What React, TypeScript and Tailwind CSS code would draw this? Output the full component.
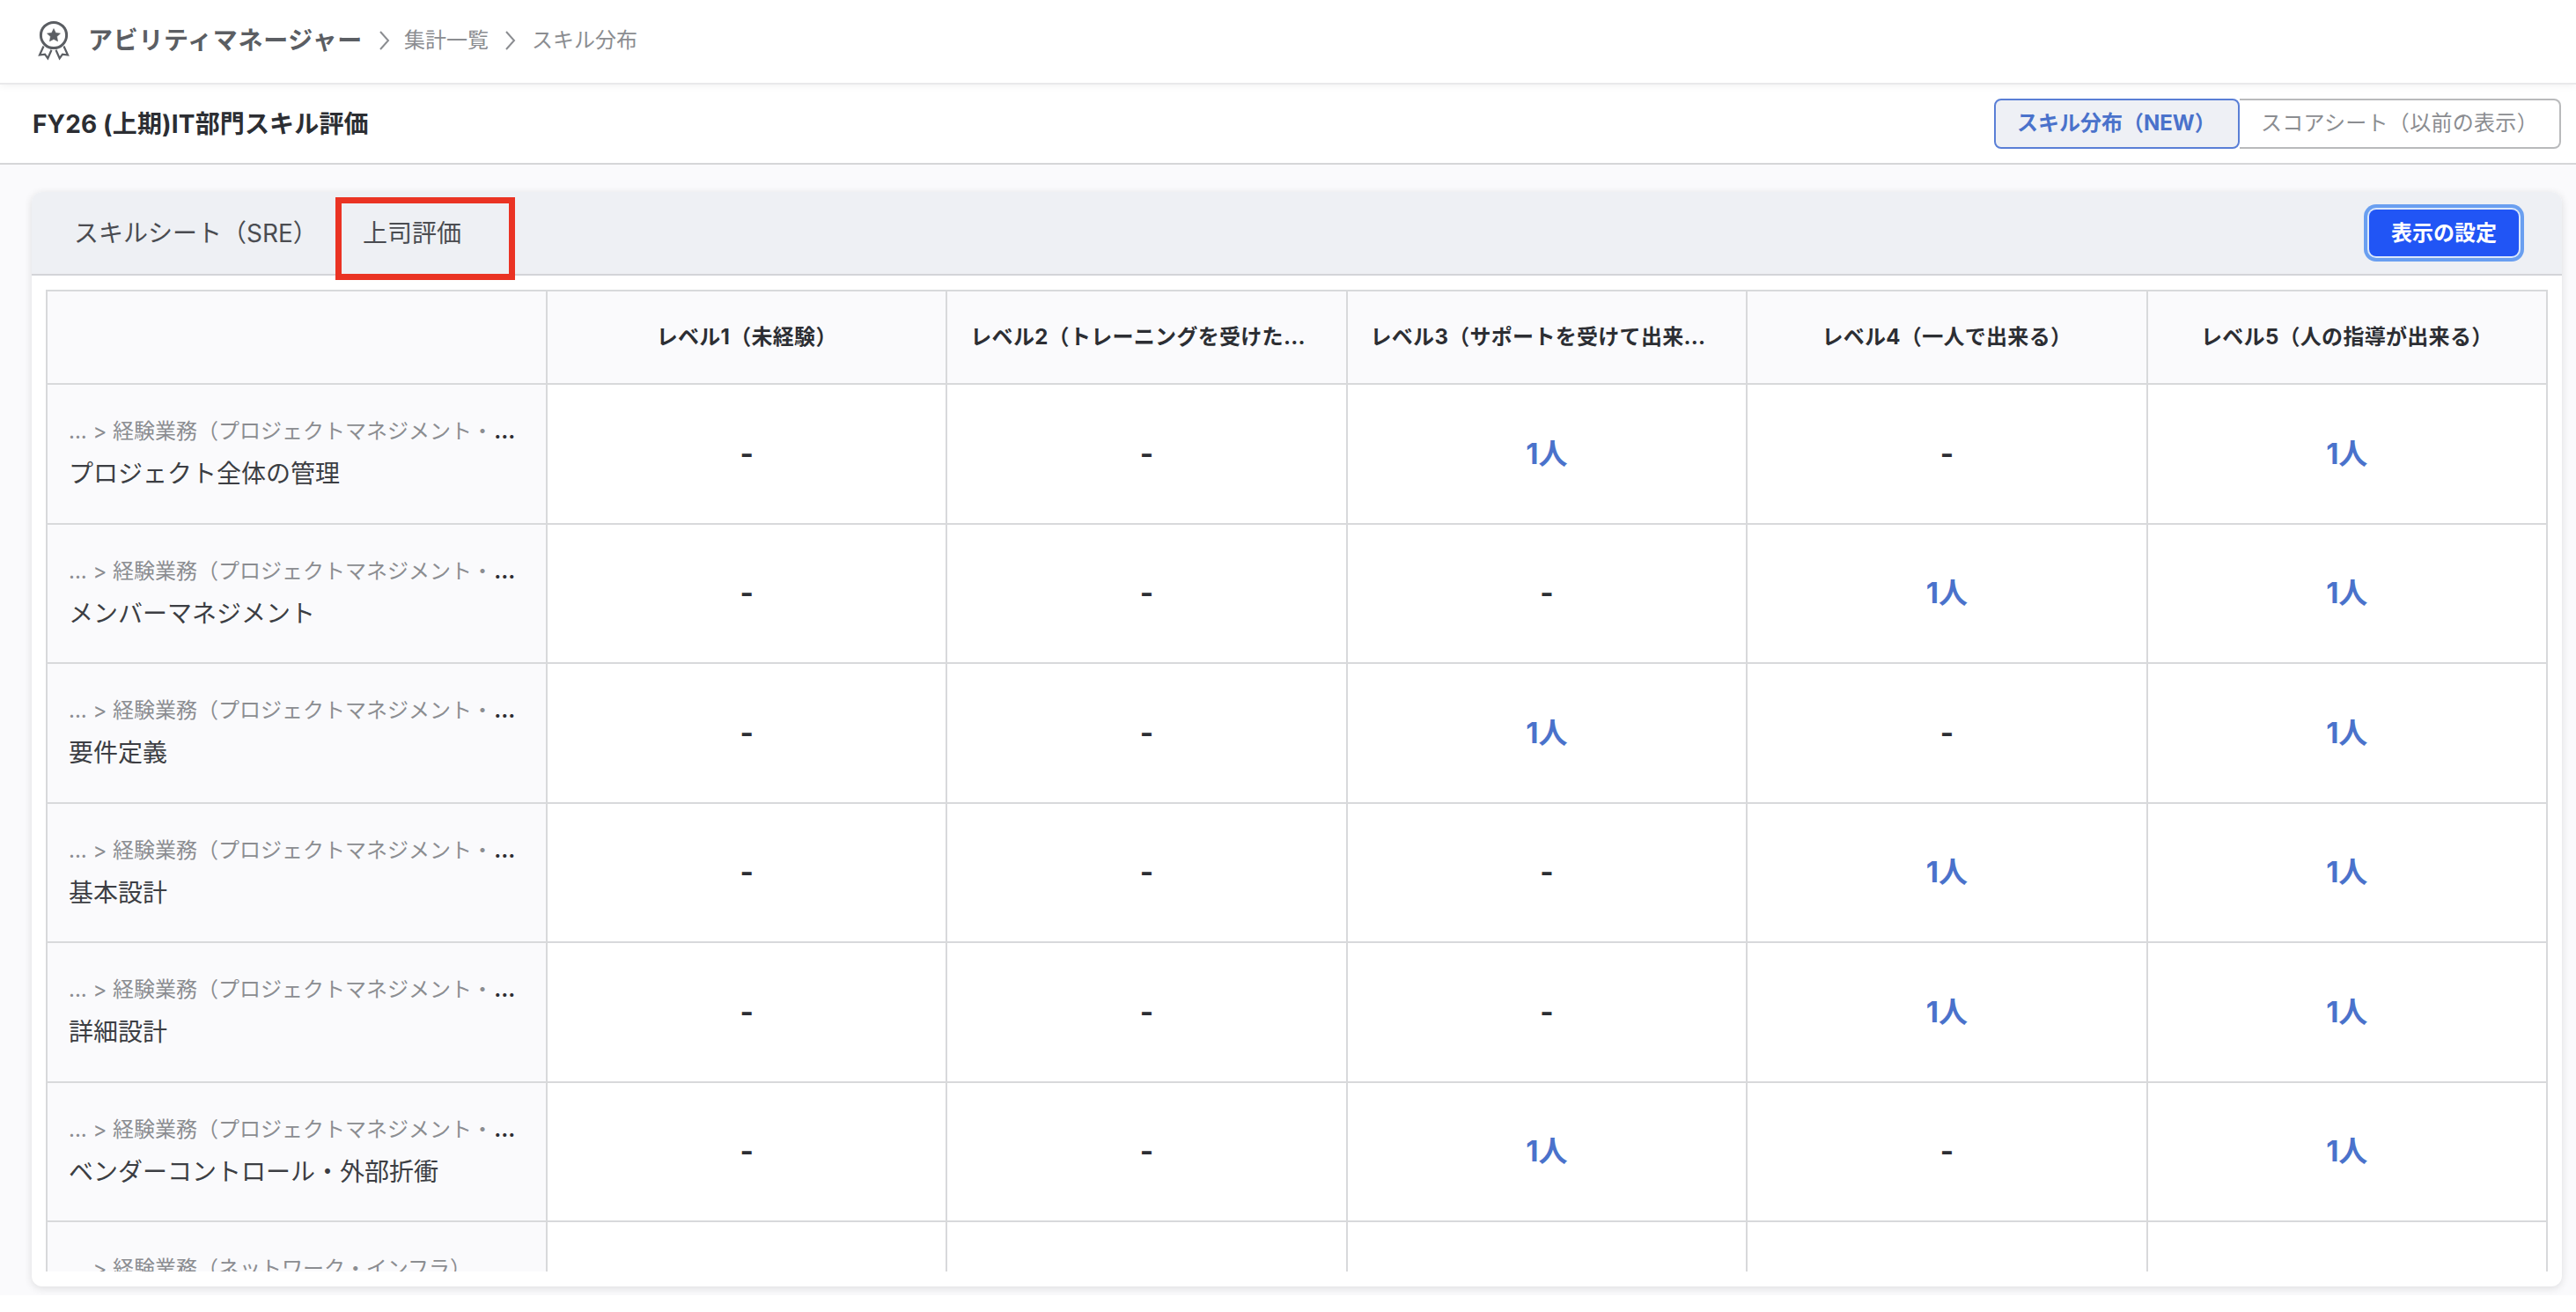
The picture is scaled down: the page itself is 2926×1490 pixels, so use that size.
import { clsx } from "clsx";

interface Skill {
  parent: string;
  truncated: boolean;
  name: string;
  counts: number[];
}

const PROJECT = "... > 経験業務（プロジェクトマネジメント・";

const levels = [
  "レベル1（未経験）",
  "レベル2（トレーニングを受けた...",
  "レベル3（サポートを受けて出来...",
  "レベル4（一人で出来る）",
  "レベル5（人の指導が出来る）",
];

const skills: Skill[] = [
  { parent: PROJECT, truncated: true, name: "プロジェクト全体の管理", counts: [0, 0, 1, 0, 1] },
  { parent: PROJECT, truncated: true, name: "メンバーマネジメント", counts: [0, 0, 0, 1, 1] },
  { parent: PROJECT, truncated: true, name: "要件定義", counts: [0, 0, 1, 0, 1] },
  { parent: PROJECT, truncated: true, name: "基本設計", counts: [0, 0, 0, 1, 1] },
  { parent: PROJECT, truncated: true, name: "詳細設計", counts: [0, 0, 0, 1, 1] },
  { parent: PROJECT, truncated: true, name: "ベンダーコントロール・外部折衝", counts: [0, 0, 1, 0, 1] },
];

const MedalIcon = () => (
  <svg className="h-[46px] w-[38px] shrink-0" viewBox="0 0 38 46" fill="none" stroke="#5b5e63" strokeWidth="2.6">
    <circle cx="19" cy="17" r="14.6" strokeWidth="3" />
    <path
      d="M19 9.5l2.3 4.8 5.2.7-3.8 3.6.9 5.3-4.6-2.5-4.6 2.5.9-5.3-3.8-3.6 5.2-.7z"
      fill="#5b5e63"
      strokeWidth="0.5"
    />
    <path d="M7.5 29.5L3 39.5l6-.8 3.3 4.5 4.2-9.5" strokeWidth="2.2" />
    <path d="M30.5 29.5L35 39.5l-6-.8-3.3 4.5-4.2-9.5" strokeWidth="2.2" />
  </svg>
);

const Chevron = () => (
  <svg className="h-[24px] w-[14px] shrink-0" viewBox="0 0 14 24" fill="none" stroke="#8b8d91" strokeWidth="2">
    <path d="M2 2l9 10-9 10" />
  </svg>
);

const Header = () => (
  <header className="relative z-10 flex h-[96px] items-center border-b-2 border-[#e9e9eb] bg-white pb-[2px] pl-[42px] shadow-[0_2px_8px_rgba(0,0,0,0.05)]">
    <MedalIcon />
    <span className="ml-[20px] text-[28px] font-bold tracking-[0.7px] text-[#5b5e63]">アビリティマネージャー</span>
    <span className="ml-[18px] flex">
      <Chevron />
    </span>
    <span className="ml-[15px] text-[24px] text-[#8b8d91]">集計一覧</span>
    <span className="ml-[18px] flex">
      <Chevron />
    </span>
    <span className="ml-[17px] text-[24px] text-[#8b8d91]">スキル分布</span>
  </header>
);

const TitleBar = () => (
  <div className="flex h-[91px] items-center justify-between border-b-2 border-[#d5d6d8] bg-white pr-[17px] pl-[37px]">
    <h1 className="text-[28px] font-bold tracking-[0.15px] text-[#2c2e33]">FY26 (上期)IT部門スキル評価</h1>
    <div className="-mt-px flex h-[57px] text-[24px]">
      <button className="w-[279px] rounded-lg border-2 border-[#5a7fd6] bg-[#eef0f5] pl-[24px] text-left font-bold whitespace-nowrap text-[#4a72cb]">
        スキル分布（NEW）
      </button>
      <button className="w-[365px] rounded-r-lg border-2 border-l-0 border-[#b9babc] bg-white pl-[24px] text-left tracking-[0.3px] whitespace-nowrap text-[#8b8d91]">
        スコアシート（以前の表示）
      </button>
    </div>
  </div>
);

const Tabs = () => (
  <div className="flex h-[95px] shrink-0 items-center rounded-t-xl border-b-2 border-[#d3d4d8] bg-[#eef0f4] pr-[49px] text-[28px] text-[#4a4c51]">
    <button className="ml-[48px] whitespace-nowrap">スキルシート（SRE）</button>
    {/* highlight frame drawn over the tab */}
    <div className="absolute top-[6px] left-[345px] h-[94px] w-[204px] border-[7px] border-[#ea3323]" />
    <button className="absolute top-[26px] left-[376px] whitespace-nowrap">上司評価</button>
    <button className="ml-auto h-[53px] w-[170px] rounded-lg bg-[#2155f5] text-[24px] font-bold text-white shadow-[0_0_0_2px_#dbe8fb,0_0_0_6px_#6a9ff0]">
      表示の設定
    </button>
  </div>
);

const NameCell = ({ skill }: { skill: Skill }) => (
  <div className="flex flex-col border-r-2 border-b-2 border-[#d8d9db] bg-[#fafafc] pt-[32px] pl-[24px] whitespace-nowrap">
    <div className="flex h-[42px] items-center text-[24px] text-[#8b8d91]">
      {skill.parent}
      {skill.truncated && <span className="ml-[1px] font-bold text-[#2c2e33]">...</span>}
    </div>
    <div className="mt-[5px] flex h-[44px] items-center text-[28px] text-[#3c3e43]">{skill.name}</div>
  </div>
);

const CountCell = ({ count }: { count: number }) => (
  <div
    className={clsx(
      "flex items-center justify-center border-r-2 border-b-2 border-[#d8d9db] text-[33px] font-bold",
      count ? "text-[#4a72cb]" : "text-[#2c2e33]"
    )}
  >
    {count ? `${count}人` : "-"}
  </div>
);

const SkillRow = ({ skill }: { skill: Skill }) => (
  <>
    <NameCell skill={skill} />
    {levels.map((level, index) =>
      skill.counts.length ? (
        <CountCell key={level} count={skill.counts[index]} />
      ) : (
        <div key={level} className="border-r-2 border-[#d8d9db]" />
      )
    )}
  </>
);

const SkillTable = () => (
  <div className="mt-[16px] mr-[14px] ml-[16px] h-[1115px] overflow-hidden">
    <div className="grid w-[2842px] auto-rows-[158.5px] grid-cols-[568px_repeat(5,454.4px)] grid-rows-[106px] border-t-2 border-l-2 border-[#d8d9db]">
      <div className="border-r-2 border-b-2 border-[#d8d9db] bg-[#fafafc]" />
      {levels.map((level) => (
        <div
          key={level}
          className={clsx(
            "flex items-center justify-center border-r-2 border-b-2 border-[#d8d9db] bg-[#fafafc] text-[24px] font-bold tracking-[0.3px] whitespace-nowrap text-[#2c2e33]",
            level.endsWith("...") && "pr-[20px]"
          )}
        >
          {level}
        </div>
      ))}
      {skills.map((skill) => (
        <SkillRow key={skill.name} skill={skill} />
      ))}
      <SkillRow
        skill={{ parent: "... > 経験業務（ネットワーク・インフラ）", truncated: false, name: "", counts: [] }}
      />
    </div>
  </div>
);

export default function App() {
  return (
    <div className="h-[1490px] w-[2926px] overflow-hidden bg-white font-['Inter','Noto_Sans_CJK_JP',sans-serif]">
      <Header />
      <TitleBar />
      <main className="h-[1284px] overflow-hidden bg-[#fafafc] pt-[31px] pl-[36px]">
        <section className="relative flex h-[1243px] w-[2874px] flex-col rounded-xl bg-white shadow-[0_2px_10px_rgba(0,0,0,0.12)]">
          <Tabs />
          <SkillTable />
        </section>
      </main>
    </div>
  );
}
